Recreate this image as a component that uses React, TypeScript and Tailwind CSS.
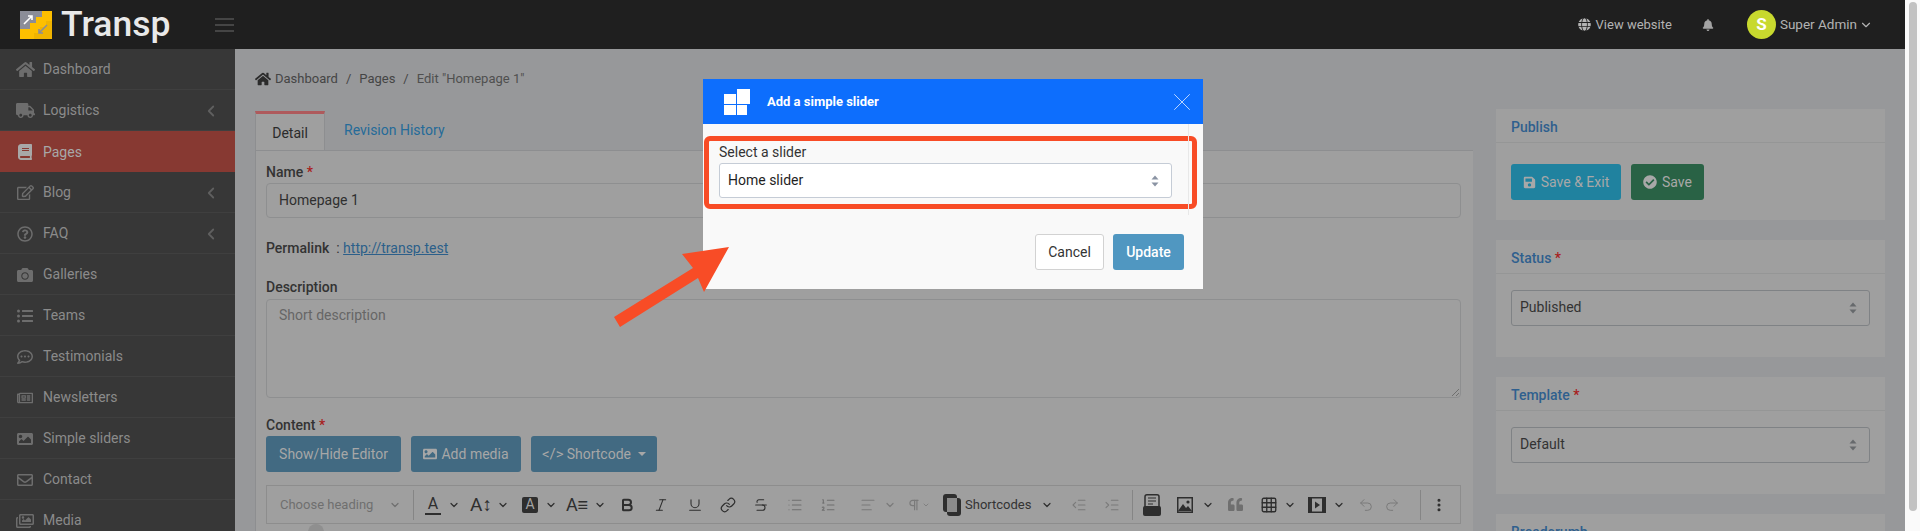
import type { ReactNode } from "react";
import {
  FaBell,
  FaBook,
  FaCamera,
  FaCheckCircle,
  FaGlobe,
  FaHome,
  FaImage,
  FaListUl,
  FaRegCommentDots,
  FaRegEdit,
  FaRegEnvelope,
  FaRegImages,
  FaRegNewspaper,
  FaRegQuestionCircle,
  FaSave,
  FaTruck,
  FaQuoteLeft,
} from "react-icons/fa";
import {
  AlignLeft,
  Bold,
  ChevronDown,
  ChevronLeft,
  EllipsisVertical,
  Grid3x3,
  IndentDecrease,
  IndentIncrease,
  Italic,
  Link,
  List,
  ListOrdered,
  Pilcrow,
  Redo2,
  Strikethrough,
  Underline,
  Undo2,
  X,
} from "lucide-react";

const menu: { label: string; icon: ReactNode; caret?: boolean; active?: boolean }[] = [
  { label: "Dashboard", icon: <FaHome size={19} /> },
  { label: "Logistics", icon: <FaTruck size={19} />, caret: true },
  { label: "Pages", icon: <FaBook size={16} />, active: true },
  { label: "Blog", icon: <FaRegEdit size={17} />, caret: true },
  { label: "FAQ", icon: <FaRegQuestionCircle size={16} />, caret: true },
  { label: "Galleries", icon: <FaCamera size={16} /> },
  { label: "Teams", icon: <FaListUl size={16} /> },
  { label: "Testimonials", icon: <FaRegCommentDots size={16} /> },
  { label: "Newsletters", icon: <FaRegNewspaper size={16} /> },
  { label: "Simple sliders", icon: <FaImage size={16} /> },
  { label: "Contact", icon: <FaRegEnvelope size={16} /> },
  { label: "Media", icon: <FaRegImages size={18} /> },
];

function Required() {
  return <span className="text-[#a81c1c]"> *</span>;
}

function SelectArrows({ color }: { color: string }) {
  return (
    <svg width="8" height="12" viewBox="0 0 8 12" fill={color}>
      <path d="M4 0.5 7.5 4.5H0.5Z" />
      <path d="M4 11.5 0.5 7.5H7.5Z" />
    </svg>
  );
}

function Panel({ title, children }: { title: ReactNode; children: ReactNode }) {
  return (
    <section className="mb-5 bg-[#9f9f9f]">
      <h3 className="h-[34px] border-b border-[#959696] pt-[8px] pl-[15px] text-[14px] leading-[20px] font-medium text-[#2f5f8e]">
        {title}
      </h3>
      {children}
    </section>
  );
}

function PanelSelect({ value }: { value: string }) {
  return (
    <div className="px-[15px] pt-4 pb-[31px]">
      <div className="flex h-[36px] items-center justify-between rounded-[3px] border border-[#7f8285] pr-[12px] pb-px pl-2 text-[14px] text-[#333333]">
        {value}
        <SelectArrows color="#66696c" />
      </div>
    </div>
  );
}

function Chev({ className }: { className: string }) {
  return <ChevronDown size={12} strokeWidth={2.4} className={`shrink-0 ${className}`} />;
}

function ToolSep({ className }: { className: string }) {
  return <div className={`h-[30px] w-px shrink-0 bg-[#858585] ${className}`} />;
}

function EditorToolbar() {
  return (
    <div className="flex h-[39px] items-center border border-[#8d8d8d] pl-[13px] text-[#2e2e2e]">
      <span className="w-[94px] shrink-0 text-[13px] whitespace-nowrap text-[#6f6f6f]">Choose heading</span>
      <Chev className="ml-[15px] text-[#6f6f6f]" />
      <ToolSep className="ml-3" />
      <span className="ml-[11px] flex h-[20px] w-4 shrink-0 items-start justify-center border-b-2 border-[#2e2e2e] text-[16px] leading-[18px]">A</span>
      <Chev className="ml-[7px]" />
      <span className="ml-[11px] flex w-5 shrink-0 justify-center text-[19px] leading-none">A↕</span>
      <Chev className="ml-[6px]" />
      <span className="ml-[13px] flex h-4 w-4 shrink-0 items-center justify-center rounded-[2px] bg-[#2e2e2e] text-[14px] text-[#a3a3a3]">A</span>
      <Chev className="ml-[7px]" />
      <span className="ml-[11px] flex w-[18px] shrink-0 justify-center text-[18px] leading-none">A≡</span>
      <Chev className="ml-2" />
      <Bold size={16} strokeWidth={3} className="ml-[13px] shrink-0" />
      <Italic size={16} strokeWidth={1.6} className="ml-[18px] shrink-0" />
      <Underline size={16} strokeWidth={1.6} className="ml-[18px] shrink-0" />
      <Link size={16} strokeWidth={1.8} className="ml-[17px] shrink-0" />
      <Strikethrough size={16} strokeWidth={1.6} className="ml-[17px] shrink-0" />
      <List size={16} strokeWidth={1.6} className="ml-[18px] shrink-0 text-[#6f6f6f]" />
      <ListOrdered size={16} strokeWidth={1.6} className="ml-[17px] shrink-0 text-[#6f6f6f]" />
      <AlignLeft size={16} strokeWidth={1.6} className="ml-6 shrink-0 text-[#7a7a7a]" />
      <Chev className="ml-2 text-[#7a7a7a]" />
      <Pilcrow size={14} strokeWidth={2} className="ml-[11px] shrink-0 text-[#7a7a7a]" />
      <ChevronDown size={8} strokeWidth={2.4} className="ml-px shrink-0 text-[#7a7a7a]" />
      <svg width="20" height="24" viewBox="0 0 20 24" fill="none" className="ml-3 shrink-0">
        <rect x="1" y="1" width="14" height="18" rx="3" fill="#2e2e2e" />
        <rect x="5" y="5" width="14" height="18" rx="3" fill="#2e2e2e" />
        <rect x="5" y="5" width="10" height="14" fill="#8b8b8b" />
      </svg>
      <span className="ml-[3px] w-[65px] shrink-0 text-[13px] whitespace-nowrap text-[#333333]">Shortcodes</span>
      <Chev className="ml-[11px]" />
      <IndentDecrease size={16} strokeWidth={1.6} className="ml-[18px] shrink-0 text-[#7a7a7a]" />
      <IndentIncrease size={16} strokeWidth={1.6} className="ml-[17px] shrink-0 text-[#7a7a7a]" />
      <ToolSep className="ml-3" />
      <svg width="18" height="22" viewBox="0 0 18 22" className="ml-[10px] shrink-0">
        <rect x="2" y="0.75" width="14" height="14" rx="2" fill="none" stroke="#2e2e2e" strokeWidth="1.5" />
        <path d="M5 4H13M5 7H13M5 10H10" stroke="#2e2e2e" strokeWidth="1.2" />
        <rect x="0" y="12" width="18" height="10" rx="2" fill="#2e2e2e" />
      </svg>
      <svg width="16" height="16" viewBox="0 0 16 16" className="ml-4 shrink-0">
        <rect x="0.75" y="0.75" width="14.5" height="14.5" fill="none" stroke="#2e2e2e" strokeWidth="1.5" />
        <circle cx="11" cy="5" r="1.6" fill="#2e2e2e" />
        <path d="M1 14 6 7 9 11 11 9 15 14Z" fill="#2e2e2e" />
      </svg>
      <Chev className="ml-[9px]" />
      <FaQuoteLeft size={15} className="ml-[14px] shrink-0 text-[#6f6f6f]" />
      <Grid3x3 size={18} strokeWidth={1.8} className="ml-[17px] shrink-0" />
      <Chev className="ml-[6px]" />
      <svg width="18" height="16" viewBox="0 0 18 16" className="ml-3 shrink-0">
        <rect x="0.75" y="0.75" width="16.5" height="14.5" fill="none" stroke="#2e2e2e" strokeWidth="1.5" />
        <rect x="0" y="0" width="4" height="16" fill="#2e2e2e" />
        <rect x="14" y="0" width="4" height="16" fill="#2e2e2e" />
        <path d="M7 4.5 12 8 7 11.5Z" fill="#2e2e2e" />
      </svg>
      <Chev className="ml-[7px]" />
      <Undo2 size={16} strokeWidth={1.5} className="ml-[13px] shrink-0 text-[#7a7a7a]" />
      <Redo2 size={16} strokeWidth={1.5} className="ml-[10px] shrink-0 text-[#7a7a7a]" />
      <ToolSep className="ml-5" />
      <EllipsisVertical size={16} strokeWidth={2.6} className="ml-[10px] shrink-0" />
    </div>
  );
}

function SliderModal() {
  return (
    <div className="absolute top-[79px] left-[703px] h-[210px] w-[500px] bg-[#f9f9f9]">
      <div className="flex h-[45px] items-center bg-[#0d6efd] pr-[6px] pl-[21px] text-white">
        <svg width="26" height="26" viewBox="0 0 26 26" fill="#fff">
          <rect x="0" y="5" width="12" height="10" />
          <rect x="13" y="0" width="13" height="15" />
          <rect x="0" y="16" width="12" height="10" />
          <rect x="13" y="16" width="10" height="10" />
        </svg>
        <span className="ml-[17px] flex-1 text-[13px] font-bold">Add a simple slider</span>
        <X size={30} strokeWidth={0.8} className="text-[#b9d5ff]" />
      </div>
      <div className="absolute top-[45px] left-[485px] h-[91px] w-px bg-[#e8e8e8]" />
      <div className="mt-3 ml-px h-[73px] w-[493px] rounded-[6px] border-[5px] border-[#f84c26] pt-[4px] pl-[10px]">
        <label className="block text-[14px] leading-[15px] text-[#333333]">Select a slider</label>
        <div className="mt-[3px] flex h-[35px] w-[453px] items-center justify-between rounded-[3px] border border-[#c5ccd6] bg-white pr-[12px] pl-2 text-[14px] text-[#1f1f1f]">
          Home slider
          <SelectArrows color="#8a93a3" />
        </div>
      </div>
      <div className="mt-[25px] flex justify-end gap-[9px] pr-[19px] text-[14px]">
        <button className="h-[36px] w-[69px] rounded-[3px] border border-[#d2d2d2] bg-white text-[#333333]">Cancel</button>
        <button className="h-[36px] w-[71px] rounded-[3px] bg-[#5097c1] font-medium text-white">Update</button>
      </div>
    </div>
  );
}

export default function App() {
  return (
    <div className="relative flex h-[531px] w-[1920px] overflow-hidden bg-[#fafafa] font-['Roboto',sans-serif] text-[14px]">
      <div className="flex w-[1905px] flex-col">
        <header className="flex h-[49px] shrink-0 items-center bg-[#1f1f1f]">
          <svg width="32" height="28" viewBox="0 0 32 28" className="ml-5 shrink-0">
            <rect width="32" height="28" fill="#fdbf00" />
            <path d="M0 0H22V6H16V12H10V18H0Z" fill="#8b8d98" />
            <path d="M32 28H14V22H20V16H26V10H32Z" fill="#f0b400" />
            <path d="M4 13 12 5M8 5H12V9" stroke="#fff" strokeWidth="1.6" fill="none" />
            <path d="M27 14 19 22M23 22H19V18" stroke="#8b8d98" strokeWidth="1.6" fill="none" />
          </svg>
          <span className="ml-[9px] text-[35.5px] leading-none font-medium text-[#e9e9e9]">Transp</span>
          <svg width="19" height="14" viewBox="0 0 19 14" stroke="#6d6d6d" className="ml-[45px] shrink-0">
            <path d="M0 1H19M0 7H19M0 13H19" />
          </svg>
          <div className="ml-auto flex items-center text-[13px] text-[#b3b3b3]">
            <FaGlobe size={13} />
            <span className="ml-[5px]">View website</span>
            <FaBell size={12} className="ml-[30px] text-[#a3a3a3]" />
            <span className="ml-[33px] flex h-[29px] w-[29px] items-center justify-center rounded-full bg-[#c8d92e] text-[17px] font-bold text-white">S</span>
            <span className="ml-[4px] text-[13.5px]">Super Admin</span>
            <ChevronDown size={14} strokeWidth={2} className="mr-[32px] ml-[2px]" />
          </div>
        </header>
        <div className="flex min-h-0 flex-1">
          <aside className="w-[235px] shrink-0 bg-[#373737] text-[#8b8b8b]">
            {menu.map((item) => (
              <div
                key={item.label}
                className={`flex h-[41px] items-center border-b border-[#3f3f3f] pt-px ${item.active ? "border-b-0 bg-[#873932] text-[#a8a8a8]" : ""}`}
              >
                <span className="flex w-[50px] shrink-0 justify-center text-[#6d6d6d]">
                  <span className={item.active ? "text-[#a8a8a8]" : ""}>{item.icon}</span>
                </span>
                <span className="-ml-[7px] flex-1">{item.label}</span>
                {item.caret && <ChevronLeft size={18} strokeWidth={2.4} className="mr-[15px] text-[#5f5f5f]" />}
              </div>
            ))}
          </aside>
          <main className="flex min-w-0 flex-1 bg-[#97989a] pl-5 text-[#333333]">
            <div className="w-[1218px] shrink-0">
              <nav className="mt-5 flex h-5 items-center text-[13px] text-[#454545]">
                <FaHome size={16} className="text-[#2b2b2b]" />
                <span className="ml-[4px]">Dashboard</span>
                <span className="mx-2">/</span>
                <span>Pages</span>
                <span className="mx-2">/</span>
                <span className="text-[#4f4f4f]">Edit "Homepage 1"</span>
              </nav>
              <div className="mt-[22px] flex h-[39px] items-stretch">
                <div className="flex w-[70px] items-center justify-center border-t-[3px] border-r border-l border-t-[#ae5a5c] border-r-[#8d8e90] border-l-[#8d8e90] bg-[#9f9f9f] pt-[2px] text-[#2b2b2b]">Detail</div>
                <div className="ml-[19px] flex items-center pb-[1px] text-[#256b99]">Revision History</div>
              </div>
              <div className="h-[400px] border-t border-l border-[#8d8e90] bg-[#9f9f9f] pt-[11px] pr-[12px] pl-[10px]">
                <label className="block leading-[21px] font-medium">Name<Required /></label>
                <div className="flex h-[35px] items-center rounded-[4px] border border-[#8e8f90] pl-[12px] text-[#2f2f2f]">Homepage 1</div>
                <div className="mt-5 leading-[20px]">
                  <span className="font-medium">Permalink</span>
                  <span>&nbsp;&nbsp;: </span>
                  <span className="text-[#2c5f8a] underline">http://transp.test</span>
                </div>
                <label className="mt-[19px] block leading-[21px] font-medium">Description</label>
                <div className="relative mt-px h-[99px] rounded-[4px] border border-[#8e8f90] pt-[5px] pl-[12px] text-[#666666]">
                  Short description
                  <svg width="8" height="8" viewBox="0 0 8 8" stroke="#6f6f6f" className="absolute right-[1px] bottom-[1px]">
                    <path d="M1 8 8 1M5 8 8 5" />
                  </svg>
                </div>
                <label className="mt-[17px] block leading-[21px] font-medium">Content<Required /></label>
                <div className="flex h-[36px] gap-[10px] text-[#a7a7a7]">
                  <button className="w-[135px] rounded-[3px] bg-[#426a82]">Show/Hide Editor</button>
                  <button className="flex w-[110px] items-center justify-center gap-[4px] rounded-[3px] bg-[#426a82]">
                    <FaImage size={14} />
                    Add media
                  </button>
                  <button className="flex w-[126px] items-center justify-center gap-[3px] rounded-[3px] bg-[#426a82]">
                    <span className="text-[15px]">&lt;/&gt;</span>
                    Shortcode
                    <span className="ml-[4px] h-0 w-0 border-x-[4px] border-t-[4px] border-x-transparent border-t-[#a7a7a7]" />
                  </button>
                </div>
                <div className="mt-[13px]">
                  <EditorToolbar />
                  <div className="ml-[42px] h-4 w-4 rounded-full bg-[#8f8f8f]" />
                </div>
              </div>
            </div>
            <div className="ml-[23px] w-[389px] shrink-0 pt-[60px]">
              <Panel title="Publish">
                <div className="flex gap-[10px] px-[15px] pt-[21px] pb-[20px] text-[#a8a8a8]">
                  <button className="flex h-[36px] w-[110px] items-center justify-center gap-[5px] rounded-[3px] bg-[#20829f]">
                    <FaSave size={13} />
                    Save &amp; Exit
                  </button>
                  <button className="flex h-[36px] w-[73px] items-center justify-center gap-[5px] rounded-[3px] bg-[#296245]">
                    <FaCheckCircle size={14} />
                    Save
                  </button>
                </div>
              </Panel>
              <Panel title={<>Status<Required /></>}>
                <PanelSelect value="Published" />
              </Panel>
              <Panel title={<>Template<Required /></>}>
                <PanelSelect value="Default" />
              </Panel>
              <Panel title="Breadcrumb">
                <div className="h-10" />
              </Panel>
            </div>
          </main>
        </div>
      </div>
      <div className="w-[15px] shrink-0 pt-[2px] pl-1">
        <div className="h-[509px] w-2 rounded-full bg-[#c2c2c2]" />
      </div>
      <SliderModal />
      <svg width="130" height="90" viewBox="0 0 130 90" className="absolute top-[243px] left-[610px]">
        <path d="M119 4 94 49 88 35 10 84 4 74 83 25 72 11Z" fill="#f84c26" />
      </svg>
    </div>
  );
}
